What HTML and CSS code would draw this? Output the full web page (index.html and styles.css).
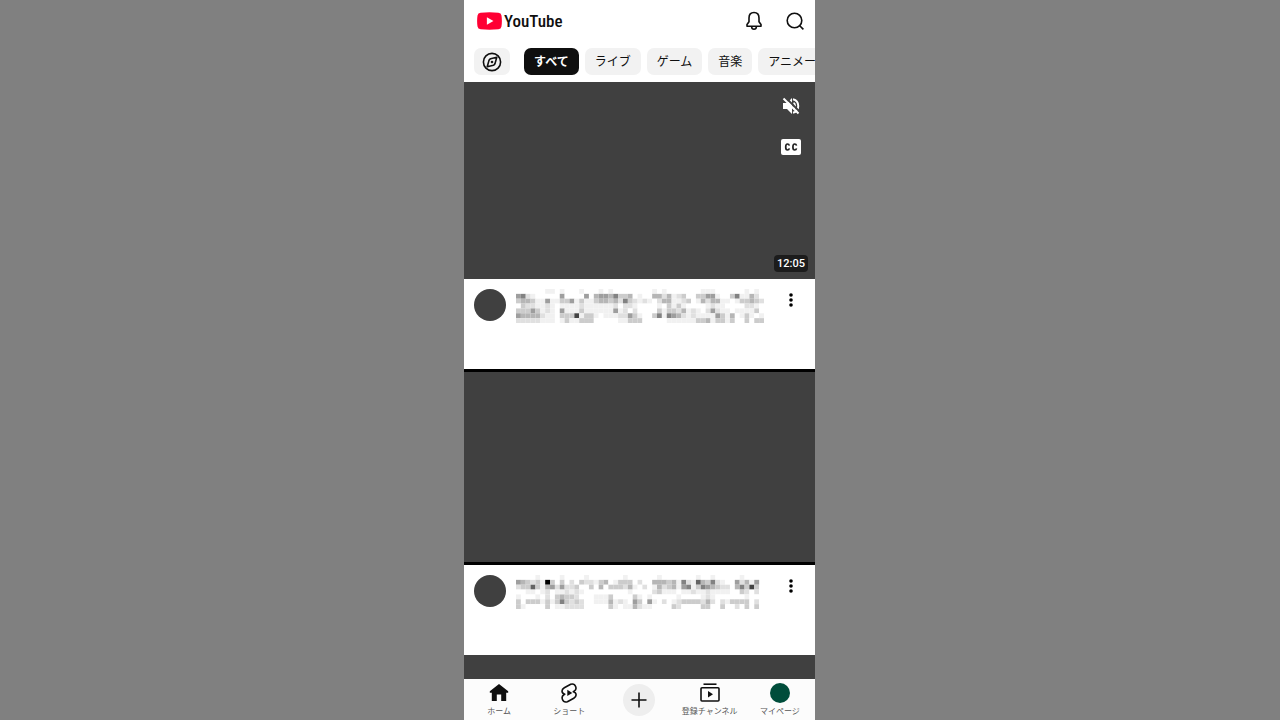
FILE: index.html
```html
<!DOCTYPE html>
<html lang="ja">
<head>
<meta charset="utf-8">
<meta name="viewport" content="width=device-width, initial-scale=1">
<title>YouTube</title>
<link rel="stylesheet" href="styles.css">
</head>
<body>
<div class="app">
  <header class="topbar">
    <a class="logo" href="#" aria-label="YouTube">
      <svg class="logo-mark" viewBox="0 0 24 17" aria-hidden="true"><path fill="#ff0033" d="M3.5.5Q12-.4 20.5.5 23.2.8 23.5 3.2 24.3 8.500 23.500 13.800 23.200 16.200 20.500 16.500 12 17.400 3.500 16.500.8 16.200.500 13.800-.3 8.500.500 3.200.8.8 3.500.5Z"/><path fill="#fff" d="M9.500 5v7l6.300-3.500z"/></svg>
      <span class="logo-text">YouTube</span>
    </a>
    <div class="actions">
      <button class="icon-button" aria-label="通知">
        <svg viewBox="0 0 20 20" class="icon line"><path d="M10 1.500C6.800 1.500 5 3.800 5 7v3.700L3 13.500v1.800h14v-1.800l-2-2.800V7c0-3.200-1.800-5.500-5-5.500Z"/><path d="M7.600 15.800c.2 3.300 4.600 3.300 4.800 0"/></svg>
      </button>
      <button class="icon-button" aria-label="検索">
        <svg viewBox="0 0 20 20" class="icon line"><circle cx="9.500" cy="9.500" r="7.300"/><path d="m14.700 14.700 3.700 3.700"/></svg>
      </button>
    </div>
  </header>
  <nav class="chips" aria-label="カテゴリ">
    <button class="chip explore" aria-label="探索">
      <svg viewBox="0 0 20 20" class="icon line"><circle cx="10" cy="10" r="8.600"/><path d="M14.800 5.200 8.600 6.800Q7.500 7.200 7 8.400L5.200 14.800l6.200-1.600q1.100-.4 1.600-1.600z"/><circle cx="10" cy="10" r=".5"/></svg>
    </button>
    <button class="chip selected">すべて</button>
    <button class="chip">ライブ</button>
    <button class="chip">ゲーム</button>
    <button class="chip">音楽</button>
    <button class="chip">アニメーション</button>
  </nav>
  <main class="feed">
    <article>
      <div class="video">
        <div class="controls">
          <button class="icon-button" aria-label="ミュート解除">
            <svg viewBox="0 0 20 20" class="icon"><path fill="#fff" d="M2 7h4l5-5v16l-5-5H2z"/><path fill="none" stroke="#fff" stroke-width="2" d="M12 3.200c7 1.800 7 11.800 0 13.600M12.500 7c2 1 2 5 0 6"/><path stroke="#404040" stroke-width="2" d="m4 1 15 15"/><path stroke="#fff" stroke-width="2" d="m2.500 2.500 15 15"/></svg>
          </button>
          <button class="icon-button" aria-label="字幕">
            <svg viewBox="0 0 20 20" class="icon"><rect y="2" width="20" height="16" rx="2" fill="#fff"/><path fill="none" stroke="#222" stroke-width="1.700" d="M8.300 8.700Q8 7 6.500 7 4.700 7 4.700 10t1.800 3q1.500 0 1.800-1.700M15.500 8.700Q15.200 7 13.700 7q-1.800 0-1.800 3t1.800 3q1.500 0 1.800-1.700"/></svg>
          </button>
        </div>
        <span class="duration">12:05</span>
      </div>
      <div class="meta">
        <span class="avatar"></span>
        <svg class="mosaic" id="title-one" viewBox="0 0 51 7" preserveAspectRatio="none" aria-hidden="true"></svg>
        <button class="more" aria-label="その他"><svg viewBox="0 0 4 14"><circle cx="2" cy="2" r="1.800"/><circle cx="2" cy="7" r="1.800"/><circle cx="2" cy="12" r="1.800"/></svg></button>
      </div>
    </article>
    <article>
      <div class="video wide"></div>
      <div class="meta">
        <span class="avatar"></span>
        <svg class="mosaic" id="title-two" viewBox="0 0 51 7" preserveAspectRatio="none" aria-hidden="true"></svg>
        <button class="more" aria-label="その他"><svg viewBox="0 0 4 14"><circle cx="2" cy="2" r="1.800"/><circle cx="2" cy="7" r="1.800"/><circle cx="2" cy="12" r="1.800"/></svg></button>
      </div>
    </article>
    <article><div class="video"></div></article>
  </main>
  <nav class="tabs" aria-label="メイン">
    <a class="tab" href="#">
      <svg viewBox="0 0 20 20" class="icon"><path fill="#0f0f0f" d="M10 1 .8 8.300v1.500h2V18h5v-6.500h4.400V18h5V9.800h2V8.300z"/></svg>
      <span>ホーム</span>
    </a>
    <a class="tab" href="#">
      <svg viewBox="0 0 20 20" class="icon line"><path d="M11.700 1.200 5.300 4.700c-3.300 1.900-2.900 5.600.5 6.500l-.9.600c-3.200 1.800-1.800 8.400 3.500 6.900l6.400-3.500c3.300-1.900 2.900-5.700-.5-6.500l.9-.6c3.300-1.900 1.700-8.300-3.500-6.900Z"/><path fill="#0f0f0f" stroke="none" d="M8.300 6.800v6.200l5-3.100z"/></svg>
      <span>ショート</span>
    </a>
    <button class="create" aria-label="作成"><svg viewBox="0 0 20 20" class="icon line"><path d="M10 2.500v15M2.500 10h15"/></svg></button>
    <a class="tab" href="#">
      <svg viewBox="0 0 20 20" class="icon line"><path d="M3.500 1.200h13"/><rect x="1" y="4.800" width="18" height="13.200" rx="1"/><path fill="#0f0f0f" stroke="none" d="M8 8v6.500l5-3.200z"/></svg>
      <span>登録チャンネル</span>
    </a>
    <a class="tab" href="#">
      <span class="profile"></span>
      <span>マイページ</span>
    </a>
  </nav>
</div>
<script src="mosaic.js"></script>
</body>
</html>
```

FILE: styles.css
```css
* { box-sizing: border-box; }

body {
  margin: 0;
  padding-right: 1px;
  background: #808080;
  color: #0f0f0f;
  font-family: Roboto, "Noto Sans CJK JP", sans-serif;
}

button {
  padding: 0;
  border: 0;
  background: none;
  color: inherit;
  font: inherit;
}

a { color: inherit; text-decoration: none; }

svg { display: block; }

.app {
  display: flex;
  flex-direction: column;
  max-width: 351px;
  height: 100vh;
  margin: 0 auto;
  overflow: hidden;
  background: #fff;
}

.topbar {
  display: flex;
  flex: none;
  align-items: center;
  justify-content: space-between;
  height: 41px;
  padding: 0 10px 0 13px;
}

.logo { display: flex; align-items: center; gap: 2px; }
.logo-mark { width: 25px; height: 18px; }

.logo-text {
  font: 500 17px/24px "Roboto Condensed", "Liberation Sans Narrow", Roboto, sans-serif;
}

.actions { display: flex; gap: 21px; }
.icon { width: 20px; height: 20px; }

.line {
  fill: none;
  stroke: #0f0f0f;
  stroke-width: 1.6;
  stroke-linejoin: round;
}

.chips {
  display: flex;
  flex: none;
  gap: 6px;
  padding: 7px 0 7px 10px;
  overflow: hidden;
}

.chip {
  flex: none;
  height: 27px;
  padding: 2px 10px 0;
  border-radius: 7px;
  background: #f2f2f2;
  font-size: 12px;
  line-height: 25px;
  white-space: nowrap;
}

.chip.selected { background: #0f0f0f; color: #fff; font-weight: bold; }
.chip.explore { margin-right: 8px; padding: 0 8px; }

.feed { flex: 1; min-height: 0; overflow: hidden; }

.video {
  position: relative;
  aspect-ratio: 16 / 9;
  background: #404040;
}

.video.wide {
  height: 196px;
  aspect-ratio: auto;
  border: solid #000;
  border-width: 3px 0;
}

.controls {
  display: flex;
  flex-direction: column;
  align-items: flex-end;
  gap: 21px;
  padding: 14px 14px 0 0;
}

.duration {
  position: absolute;
  right: 7px;
  bottom: 7px;
  padding: 0 3px;
  border-radius: 4px;
  background: #1c1c1c;
  color: #fff;
  font-size: 11px;
  font-weight: 500;
  line-height: 17px;
}

.meta {
  display: flex;
  gap: 10px;
  height: 90px;
  padding: 10px 22px 0 10px;
}

.avatar {
  flex: none;
  width: 32px;
  height: 32px;
  border-radius: 50%;
  background: #404040;
}

.mosaic { flex: 1; min-width: 0; height: 34px; }

.more { width: 4px; height: 14px; margin: 4px 0 0 15px; }
.more svg { width: 4px; height: 14px; }

.tabs {
  display: grid;
  flex: none;
  grid-template-columns: repeat(5, 1fr);
  height: 41px;
  background: #fcfcfc;
}

.tab {
  display: flex;
  flex-direction: column;
  align-items: center;
  gap: 3px;
  padding-top: 4px;
  color: #555;
  font-size: 8px;
  line-height: 12px;
  white-space: nowrap;
}

.profile {
  width: 20px;
  height: 20px;
  border-radius: 50%;
  background: #004d3b;
}

.create {
  display: grid;
  place-items: center;
  place-self: center;
  width: 32px;
  height: 32px;
  border-radius: 50%;
  background: #eee;
}
```

FILE: mosaic.js
```js
// Each digit is the darkness of one mosaic cell.
const titles = {
  "title-one": [
    "000000110100010001010000000010100000001110000001010",
    "562100000500005045546334010044241230033551003611420",
    "344311511335131134434263212102441123014244110133432",
    "032211210111121111112022100001031310000121100002210",
    "333531210511131111115120200003133241210252110111130",
    "544442110333813310111225310036165421211115314013101",
    "222221110131133300000113330000011111133413313003033"
  ],
  "title-two": [
    "000010000100001000000010000001000000010010000010000",
    "543231A3030203221340133302004443416217436210052415",
    "233731452522300304033324102014234156136543220463830",
    "001101201121210000000001000023111011211211110032020",
    "100010203433200011130000310100000100001210000001000",
    "303331313632320011141210530510201233332420213333020",
    "310000301122220000031011421100003200003300300203030"
  ]
};

for (const [id, rows] of Object.entries(titles)) {
  const svg = document.getElementById(id);
  rows.forEach((row, y) => [...row].forEach((cell, x) => {
    const shade = 255 - Math.min(255, parseInt(cell, 16) ** 2 * 1.3 + parseInt(cell, 16) * 13);
    const rect = document.createElementNS("http://www.w3.org/2000/svg", "rect");
    rect.setAttribute("x", x);
    rect.setAttribute("y", y);
    rect.setAttribute("width", 1);
    rect.setAttribute("height", 1);
    rect.setAttribute("fill", `rgb(${shade},${shade},${shade})`);
    svg.append(rect);
  }));
}
```
